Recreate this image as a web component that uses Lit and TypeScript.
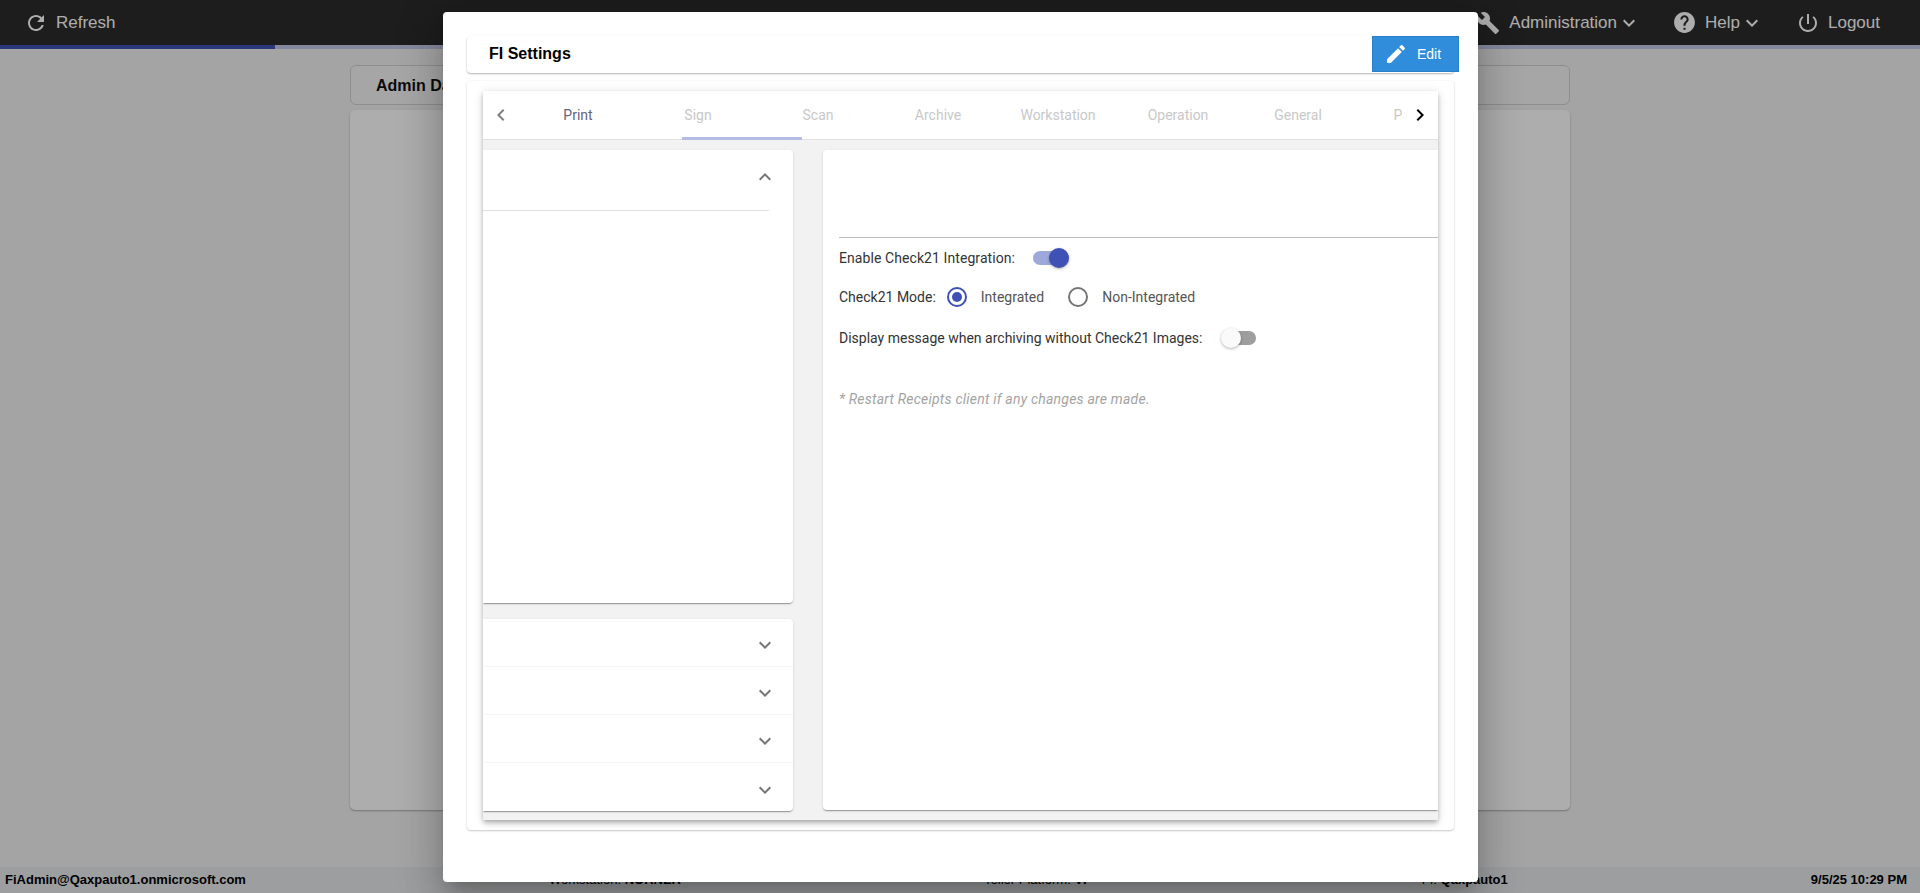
import { LitElement, html, css, svg } from "lit";
import { customElement } from "lit/decorators.js";

const icon = (d: string, size: number, cls = "") =>
  html`<svg class=${cls} width=${size} height=${size} viewBox="0 0 24 24" fill="currentColor">${svg`<path d=${d}></path>`}</svg>`;

const REFRESH = "M17.65 6.35C16.2 4.9 14.21 4 12 4c-4.42 0-7.99 3.58-7.99 8s3.57 8 7.99 8c3.73 0 6.84-2.55 7.73-6h-2.08c-.82 2.33-3.04 4-5.65 4-3.31 0-6-2.69-6-6s2.69-6 6-6c1.66 0 3.14.69 4.22 1.78L13 11h7V4l-2.35 2.35z";
const BUILD = "M22.7 19l-9.1-9.1c.9-2.3.4-5-1.5-6.9-2-2-5-2.4-7.4-1.3L9 6 6 9 1.6 4.7C.4 7.1.9 10.1 2.9 12.1c1.9 1.9 4.6 2.4 6.9 1.5l9.1 9.1c.4.4 1 .4 1.4 0l2.3-2.3c.5-.4.5-1.1.1-1.4z";
const HELP = "M12 2C6.48 2 2 6.48 2 12s4.48 10 10 10 10-4.48 10-10S17.52 2 12 2zm1 17h-2v-2h2v2zm2.07-7.75l-.9.92C13.45 12.9 13 13.5 13 15h-2v-.5c0-1.1.45-2.1 1.17-2.83l1.24-1.26c.37-.36.59-.86.59-1.41 0-1.1-.9-2-2-2s-2 .9-2 2H8c0-2.21 1.79-4 4-4s4 1.79 4 4c0 .88-.36 1.68-.93 2.25z";
const POWER = "M13 3h-2v10h2V3zm4.83 2.17l-1.42 1.42C17.99 7.86 19 9.81 19 12c0 3.87-3.13 7-7 7s-7-3.13-7-7c0-2.19 1.01-4.14 2.58-5.42L6.17 5.17C4.23 6.82 3 9.26 3 12c0 4.97 4.03 9 9 9s9-4.03 9-9c0-2.74-1.23-5.18-3.17-6.83z";
const EDIT = "M3 17.25V21h3.75L17.81 9.94l-3.75-3.75L3 17.25zM20.71 7.04c.39-.39.39-1.02 0-1.41l-2.34-2.34c-.39-.39-1.02-.39-1.41 0l-1.83 1.83 3.75 3.75 1.83-1.83z";
const DOWN = "M7.41 8.59L12 13.17l4.59-4.58L18 10l-6 6-6-6 1.41-1.41z";
const UP = "M7.41 15.41L12 10.83l4.59 4.58L18 14l-6-6-6 6z";
const LEFT = "M15.41 7.41L14 6l-6 6 6 6 1.41-1.41L10.83 12z";
const RIGHT = "M10 6L8.59 7.41 13.17 12l-4.58 4.59L10 18l6-6z";

@customElement("app-root")
export class AppRoot extends LitElement {
  static styles = css`
    :host { display: block; position: relative; width: 1920px; height: 893px; overflow: hidden; font-family: "Liberation Sans", Arial, sans-serif; }
    * { box-sizing: border-box; }
    .page { height: 893px; background: #f2f2f2; display: flex; flex-direction: column; }
    .topbar { height: 45px; flex: none; background: #2c2c2c; color: #fff; font-size: 17px; display: flex; align-items: center; padding: 0 40px 0 24px; }
    .nav { display: flex; align-items: center; }
    .refresh { margin-right: auto; gap: 8px; }
    .admin { gap: 9px; margin-right: 31px; }
    .admin .chev { margin-left: -9px; }
    .help { gap: 8px; margin-right: 32px; }
    .help .chev { margin-left: -8px; }
    .logout { gap: 8px; }
    .progress { height: 4px; flex: none; background: #c5cae9; }
    .progress-fill { height: 100%; width: 275px; background: #3f51b5; }
    .content { flex: 1; padding: 16px 350px 0; display: flex; flex-direction: column; gap: 5px; }
    .title-card { height: 40px; background: #f5f5f5; border: 1px solid #d2d2d2; border-radius: 6px; display: flex; align-items: center; padding: 2px 0 0 25px; font-weight: 700; font-size: 16px; color: #111; }
    .dash { height: 700px; background: #fff; border-radius: 5px; box-shadow: 0 1px 2px rgba(0,0,0,.3); }
    .status { height: 26px; margin-top: auto; flex: none; background: #e6e9ea; display: flex; align-items: center; justify-content: space-between; padding: 0 13px 2px 5px; font-size: 13px; color: #000; }
    .status b { font-weight: 700; }
    .status .teller { margin-right: 32px; }
    .overlay { position: absolute; inset: 0; background: rgba(0,0,0,.32); }
    .modal { position: absolute; left: 443px; top: 12px; width: 1035px; height: 870px; background: #fff; border-radius: 4px; padding: 24px 24px 0 24px; box-shadow: 0 11px 15px -7px rgba(0,0,0,.2), 0 24px 38px 3px rgba(0,0,0,.14), 0 9px 46px 8px rgba(0,0,0,.12); }
    .fi-head { height: 37px; border-radius: 4px; background: #fff; box-shadow: 0 1px 2px rgba(0,0,0,.3); display: flex; align-items: flex-start; justify-content: space-between; padding-left: 22px; font-weight: 700; font-size: 16px; line-height: 35px; color: #000; }
    .edit { width: 87px; height: 36px; margin-right: -5px; background: #2f8ddc; border: 1px solid #2a7fc6; color: #fff; font-size: 14px; font-weight: 400; display: flex; align-items: center; gap: 9px; padding-left: 11px; }
    .fi-body { margin-top: 8px; height: 749px; border-radius: 4px; padding: 10px 16px; box-shadow: 0 1px 2px rgba(0,0,0,.2), 0 0 3px rgba(0,0,0,.05); }
    .tabcard { height: 729px; display: flex; flex-direction: column; background: #f2f2f2; box-shadow: 0 2px 4px -1px rgba(0,0,0,.2), 0 4px 5px rgba(0,0,0,.14), 0 1px 10px rgba(0,0,0,.12); }
    .tabbar { height: 49px; flex: none; background: #fff; border-bottom: 1px solid #e0e0e0; display: flex; font-family: Roboto, sans-serif; font-size: 14px; position: relative; }
    .pager { flex: none; display: flex; align-items: center; justify-content: center; }
    .pager.prev { width: 35px; color: #808080; }
    .pager.next { width: 36px; color: #000; padding-right: 1px; }
    .strip { flex: 1; min-width: 0; overflow: hidden; display: flex; }
    .tab { width: 120px; flex: none; text-align: center; line-height: 48px; color: #c8c8c8; white-space: nowrap; }
    .tab.on { color: #63647f; }
    .ink { position: absolute; left: 199px; bottom: -1px; width: 120px; height: 3px; background: #b3bae3; }
    .main { flex: 1; min-height: 0; display: flex; overflow: hidden; padding: 10px 0 9px; gap: 30px; }
    .left { width: 310px; flex: none; display: flex; flex-direction: column; gap: 16px; }
    .panel { background: #fff; border-radius: 0 4px 4px 0; box-shadow: 0 2px 1px -1px rgba(0,0,0,.2), 0 1px 1px rgba(0,0,0,.14), 0 1px 3px rgba(0,0,0,.12); }
    .panel.open { height: 453px; }
    .panel.open .hd { height: 61px; width: 286px; border-bottom: 1px solid #e0e0e0; display: flex; justify-content: flex-end; padding-top: 15px; }
    .panel.open .hd svg { margin-right: -8px; }
    .panel .row { height: 48px; display: flex; align-items: center; justify-content: flex-end; padding: 5px 16px 0 0; color: #757575; border-bottom: 1px solid #f4f4f4; }
    .panel .row:last-child { border-bottom: 0; }
    .chev-dim { color: #757575; }
    .right { flex: 1; background: #fff; border-radius: 4px 0 0 4px; padding-left: 16px; font-family: Roboto, sans-serif; font-size: 14px; color: #333; margin-bottom: 1px; box-shadow: 0 2px 1px -1px rgba(0,0,0,.2), 0 1px 1px rgba(0,0,0,.14), 0 1px 3px rgba(0,0,0,.12); }
    .rule { height: 88px; border-bottom: 1px solid #bdbdbd; }
    .line { display: flex; align-items: center; height: 24px; }
    .l1 { margin-top: 8px; gap: 18px; letter-spacing: .08px; }
    .l2 { margin-top: 15px; gap: 11px; }
    .l3 { margin-top: 17px; gap: 20px; }
    .toggle { position: relative; width: 34px; height: 14px; border-radius: 7px; background: #9fa8da; }
    .toggle i { position: absolute; top: -3px; right: -2px; width: 20px; height: 20px; border-radius: 50%; background: #3f51b5; box-shadow: 0 1px 3px rgba(0,0,0,.3); }
    .toggle.off { background: #9e9e9e; }
    .toggle.off i { left: -1px; right: auto; background: #fafafa; }
    .radio { display: flex; align-items: center; gap: 14px; color: #555; }
    .radio i { position: relative; width: 20px; height: 20px; border-radius: 50%; border: 2px solid #757575; display: block; }
    .radio.on i { border-color: #3f51b5; }
    .radio.on i::after { content: ""; position: absolute; inset: 3px; border-radius: 50%; background: #3f51b5; }
    .radio + .radio { margin-left: 13px; }
    .note { margin-top: 37px; font-style: italic; color: #a3a3a3; line-height: 24px; letter-spacing: .22px; }
  `;

  render() {
    const tabs = ["Print", "Sign", "Scan", "Archive", "Workstation", "Operation", "General", "Preview"];
    return html`
      <div class="page">
        <div class="topbar">
          <div class="nav refresh">${icon(REFRESH, 24)}<span>Refresh</span></div>
          <div class="nav admin">${icon(BUILD, 24)}<span>Administration</span>${icon(DOWN, 24, "chev")}</div>
          <div class="nav help">${icon(HELP, 25)}<span>Help</span>${icon(DOWN, 24, "chev")}</div>
          <div class="nav logout">${icon(POWER, 24)}<span>Logout</span></div>
        </div>
        <div class="progress"><div class="progress-fill"></div></div>
        <div class="content">
          <div class="title-card">Admin Dashboard</div>
          <div class="dash"></div>
        </div>
        <div class="status">
          <b>FiAdmin@Qaxpauto1.onmicrosoft.com</b>
          <span>Workstation: <b>NORNER</b></span>
          <span class="teller">Teller Platform: <b>VI</b></span>
          <span>FI: <b>Qaxpauto1</b></span>
          <b>9/5/25 10:29 PM</b>
        </div>
      </div>
      <div class="overlay"></div>
      <div class="modal">
        <div class="fi-head">
          <span>FI Settings</span>
          <div class="edit">${icon(EDIT, 24)}<span>Edit</span></div>
        </div>
        <div class="fi-body">
          <div class="tabcard">
            <div class="tabbar">
              <div class="pager prev">${icon(LEFT, 24)}</div>
              <div class="strip">
                ${tabs.map((t, i) => html`<div class="tab ${i === 0 ? "on" : ""}">${t}</div>`)}
              </div>
              <div class="pager next">${icon(RIGHT, 24)}</div>
              <div class="ink"></div>
            </div>
            <div class="main">
              <div class="left">
                <div class="panel open"><div class="hd">${icon(UP, 24, "chev-dim")}</div></div>
                <div class="panel">
                  ${[0, 1, 2, 3].map(() => html`<div class="row">${icon(DOWN, 24)}</div>`)}
                </div>
              </div>
              <div class="right">
                <div class="rule"></div>
                <div class="line l1"><span>Enable Check21 Integration:</span><div class="toggle"><i></i></div></div>
                <div class="line l2">
                  <span>Check21 Mode:</span>
                  <div class="radio on"><i></i><span>Integrated</span></div>
                  <div class="radio"><i></i><span>Non-Integrated</span></div>
                </div>
                <div class="line l3"><span>Display message when archiving without Check21 Images:</span><div class="toggle off"><i></i></div></div>
                <div class="note">* Restart Receipts client if any changes are made.</div>
              </div>
            </div>
          </div>
        </div>
      </div>
    `;
  }
}
